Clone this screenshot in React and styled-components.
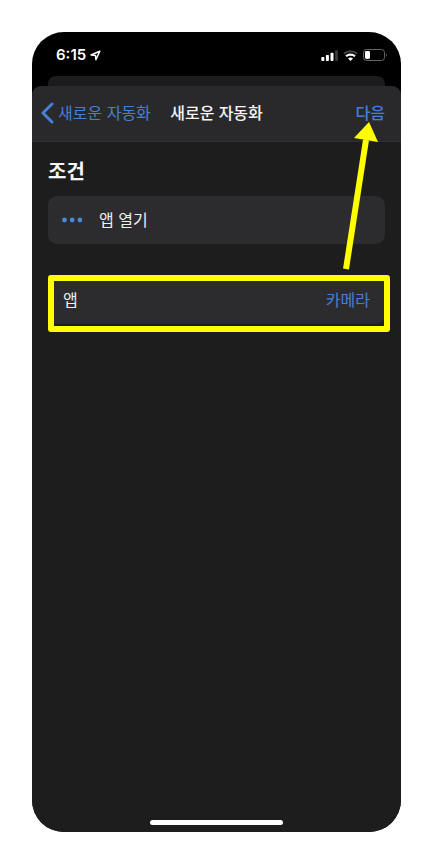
import styled, { createGlobalStyle } from "styled-components";

const GlobalStyle = createGlobalStyle`
  * {
    box-sizing: border-box;
  }

  body {
    margin: 0;
    background: #ffffff;
    font-family: "Inter", "Noto Sans CJK KR", sans-serif;
  }

  button {
    margin: 0;
    padding: 0;
    border: 0;
    background: none;
    font: inherit;
    cursor: pointer;
  }
`;

const Page = styled.div`
  display: flex;
  min-height: 100vh;
  padding: 32px;
`;

const Phone = styled.div`
  display: flex;
  flex: 1;
  flex-direction: column;
  overflow: hidden;
  border-radius: 32px;
  background: #000000;
`;

const StatusBar = styled.div`
  display: flex;
  align-items: center;
  justify-content: space-between;
  height: 44px;
  padding: 2px 14px 0 24px;
  color: #ffffff;
`;

const StatusGroup = styled.div`
  display: flex;
  align-items: center;
  gap: ${(props) => props.$gap};
`;

const Time = styled.span`
  font-size: 15px;
  font-weight: 600;
  line-height: 20px;
`;

const BackSheet = styled.div`
  height: 10px;
  margin: 0 16px;
  border-radius: 8px 8px 0 0;
  background: #1c1c1d;
`;

const Sheet = styled.main`
  display: flex;
  flex: 1;
  flex-direction: column;
  overflow: hidden;
  border-radius: 9px 9px 0 0;
  background: #1d1d1e;
`;

const NavBar = styled.header`
  display: grid;
  grid-template-columns: 1fr auto 1fr;
  align-items: center;
  height: 56px;
  padding: 0 8px 2px;
  border-bottom: 1px solid #303031;
  background: #29292b;
  font-size: 16px;
  line-height: 24px;
`;

const Title = styled.h1`
  margin: 0;
  color: #f5f5f5;
  font-size: 16px;
  font-weight: 500;
`;

const NavButton = styled.button`
  display: flex;
  align-items: center;
  gap: 4px;
  justify-self: ${(props) => props.$side};
  padding-right: ${(props) => (props.$side === "end" ? "8px" : "0")};
  color: #477fd6;
  font-weight: ${(props) => (props.$side === "end" ? 500 : 400)};
`;

const Content = styled.div`
  flex: 1;
  padding: 14px 16px;
`;

const SectionTitle = styled.h2`
  margin: 0 0 8px;
  color: #f5f5f5;
  font-size: 20px;
  font-weight: 700;
  line-height: 32px;
`;

const Row = styled.button`
  display: flex;
  align-items: center;
  width: 100%;
  height: 48px;
  border-radius: 9px;
  background: #2c2c2e;
  color: #f0f0f0;
  font-size: 16px;
  line-height: 24px;
  text-align: left;
`;

const ConditionRow = styled(Row)`
  gap: 16px;
  padding: 0 14px;
`;

const AppRow = styled(Row)`
  justify-content: space-between;
  padding: 0 15px;
`;

const RowValue = styled.span`
  color: #477fd6;
`;

const Marked = styled.div`
  position: relative;
  margin-top: 32px;
`;

const Highlight = styled.div`
  position: absolute;
  inset: -1px -5px -8px 0;
  border: 6px solid #ffff00;
  border-radius: 3px;
  pointer-events: none;
`;

const Arrow = styled.svg`
  position: absolute;
  right: 3px;
  bottom: calc(100% + 6px);
  pointer-events: none;
`;

const HomeIndicator = styled.div`
  align-self: center;
  width: 36%;
  height: 5px;
  margin-bottom: 7px;
  border-radius: 3px;
  background: #ffffff;
`;

function LocationIcon() {
  return (
    <svg width="11" height="11" viewBox="0 0 11 11" fill="none" aria-hidden="true">
      <path d="M9.8 1.2 1 5l4.5.5.4 4.3z" stroke="#fff" strokeWidth="1.5" strokeLinejoin="round" />
    </svg>
  );
}

function SignalIcon() {
  return (
    <svg width="17" height="11" viewBox="0 0 17 11" fill="#fff" aria-hidden="true">
      <rect x="0.3" y="7" width="3" height="4" rx="0.7" />
      <rect x="4.9" y="5" width="3" height="6" rx="0.7" />
      <rect x="9.5" y="2.7" width="3" height="8.3" rx="0.7" />
      <rect x="14.1" y="0.3" width="2.8" height="10.7" rx="0.7" fill="#3a3a3a" />
    </svg>
  );
}

function WifiIcon() {
  return (
    <svg width="15" height="11" viewBox="0 0 15 11" fill="none" aria-hidden="true">
      <path d="M.9 3.8a9.6 9.6 0 0 1 13.2 0" stroke="#444" strokeWidth="2" />
      <path d="M3 6.3a6.6 6.6 0 0 1 9 0" stroke="#fff" strokeWidth="2.2" />
      <path d="M5 8.5a3.8 3.8 0 0 1 5 0L7.5 11z" fill="#fff" />
    </svg>
  );
}

function BatteryIcon() {
  return (
    <svg width="24" height="12" viewBox="0 0 24 12" fill="none" aria-hidden="true">
      <rect x="0.5" y="0.5" width="21" height="11" rx="3" stroke="#666" />
      <rect x="2" y="2" width="5" height="8" rx="1.4" fill="#fff" />
      <path d="M23 4.2c1 .5 1 3.1 0 3.6z" fill="#777" />
    </svg>
  );
}

function ChevronIcon() {
  return (
    <svg width="14" height="22" viewBox="0 0 14 22" fill="none" aria-hidden="true">
      <path d="M12 2 3 11l9 9" stroke="#477fd6" strokeWidth="3" strokeLinecap="round" strokeLinejoin="round" />
    </svg>
  );
}

function DotsIcon() {
  return (
    <svg width="21" height="6" viewBox="0 0 21 6" fill="#4d86d8" aria-hidden="true">
      <circle cx="2.5" cy="3" r="2.4" />
      <circle cx="10.2" cy="3" r="2.4" />
      <circle cx="17.9" cy="3" r="2.4" />
    </svg>
  );
}

export default function App() {
  return (
    <Page>
      <GlobalStyle />
      <Phone>
        <StatusBar>
          <StatusGroup $gap="4px">
            <Time>6:15</Time>
            <LocationIcon />
          </StatusGroup>
          <StatusGroup $gap="5px">
            <SignalIcon />
            <WifiIcon />
            <BatteryIcon />
          </StatusGroup>
        </StatusBar>
        <BackSheet />
        <Sheet>
          <NavBar>
            <NavButton type="button" $side="start">
              <ChevronIcon />
              새로운 자동화
            </NavButton>
            <Title>새로운 자동화</Title>
            <NavButton type="button" $side="end">
              다음
            </NavButton>
          </NavBar>
          <Content>
            <SectionTitle>조건</SectionTitle>
            <ConditionRow type="button">
              <DotsIcon />
              <span>앱 열기</span>
            </ConditionRow>
            <Marked>
              <AppRow type="button">
                <span>앱</span>
                <RowValue>카메라</RowValue>
              </AppRow>
              <Highlight />
              <Arrow width="40" height="150" viewBox="0 0 40 150" aria-hidden="true">
                <path d="M4 149 24 20" stroke="#ffff00" strokeWidth="6" />
                <path d="M27 2 36 22 12 18z" fill="#ffff00" />
              </Arrow>
            </Marked>
          </Content>
          <HomeIndicator />
        </Sheet>
      </Phone>
    </Page>
  );
}
